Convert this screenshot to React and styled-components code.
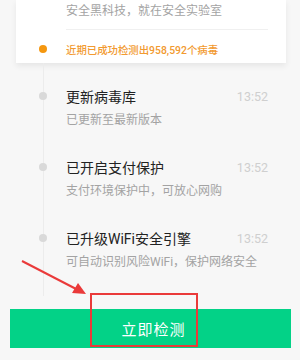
import React from 'react'
import styled, { createGlobalStyle } from 'styled-components'

const GlobalStyle = createGlobalStyle`
  html, body {
    margin: 0;
    padding: 0;
    background: #f7f7f7;
  }
  body {
    font-family: Roboto, "Noto Sans CJK SC", sans-serif;
  }
`

const Page = styled.div`
  position: relative;
  width: 300px;
  height: 360px;
  overflow: hidden;
  background: #f7f7f7;
`

const Card = styled.div`
  margin: 0 14px 0 16px;
  height: 63px;
  background: #fff;
  box-shadow: 0 3px 6px rgba(0, 0, 0, 0.07);
  display: flex;
  flex-direction: column;
`

const Slogan = styled.div`
  margin-left: 50px;
  font-size: 12px;
  line-height: 22px;
  color: #a3a3a3;
`

const Divider = styled.div`
  margin: 7px 18px 0 50px;
  height: 1px;
  background: #f0f0f0;
`

const Notice = styled.div`
  display: flex;
  align-items: center;
  margin-top: 9px;
  height: 20px;
`

const Dot = styled.span`
  flex: none;
  width: 8px;
  height: 8px;
  margin: 0 19px 0 ${(p) => p.$offset}px;
  border-radius: 50%;
  background: ${(p) => (p.$active ? '#f5970f' : '#d9d9d9')};
  position: relative;
  z-index: 1;
`

const NoticeText = styled.span`
  font-size: 10.4px;
  color: #f29a30;
  font-weight: 500;
`

const Timeline = styled.div`
  position: relative;
  padding: 22px 0 24px;

  &::before {
    content: '';
    position: absolute;
    left: 43px;
    top: 0;
    bottom: 0;
    width: 1px;
    background: #ececec;
  }
`

const Item = styled.div`
  display: flex;
  align-items: flex-start;
  margin-bottom: 26px;

  &:last-child {
    margin-bottom: 0;
  }

  ${Dot} {
    margin-top: 7px;
  }
`

const Body = styled.div`
  flex: 1;
  padding-right: 32px;
`

const TitleRow = styled.div`
  display: flex;
  justify-content: space-between;
  align-items: center;
  height: 22px;
`

const Title = styled.span`
  font-size: 14px;
  color: #222;
`

const Time = styled.span`
  font-family: Roboto, sans-serif;
  font-size: 12.5px;
  color: #cfcfcf;
`

const Desc = styled.div`
  margin-top: 3px;
  font-size: 12px;
  line-height: 20px;
  color: #a3a3a3;
`

const CheckButton = styled.button`
  display: block;
  width: 281px;
  height: 39px;
  margin: 13px 0 0 10px;
  border: none;
  background: #03d287;
  color: #fff;
  font-family: "Noto Sans CJK SC", sans-serif;
  font-size: 15px;
  letter-spacing: 1px;
  padding: 0 0 0 6px;
`

const Highlight = styled.div`
  position: absolute;
  left: 90px;
  top: 293px;
  width: 104px;
  height: 50px;
  border: 2px solid #ea3a3a;
`

const Arrow = styled.svg`
  position: absolute;
  left: 0;
  top: 250px;
`

const items = [
  { title: '更新病毒库', desc: '已更新至最新版本' },
  { title: '已开启支付保护', desc: '支付环境保护中，可放心网购' },
  { title: '已升级WiFi安全引擎', desc: '可自动识别风险WiFi，保护网络安全' },
]

export default function App() {
  return (
    <Page>
      <GlobalStyle />
      <Card>
        <Slogan>安全黑科技，就在安全实验室</Slogan>
        <Divider />
        <Notice>
          <Dot $active $offset={23} />
          <NoticeText>近期已成功检测出958,592个病毒</NoticeText>
        </Notice>
      </Card>
      <Timeline>
        {items.map((it) => (
          <Item key={it.title}>
            <Dot $offset={39} />
            <Body>
              <TitleRow>
                <Title>{it.title}</Title>
                <Time>13:52</Time>
              </TitleRow>
              <Desc>{it.desc}</Desc>
            </Body>
          </Item>
        ))}
      </Timeline>
      <CheckButton>立即检测</CheckButton>
      <Highlight />
      <Arrow width="100" height="50" viewBox="0 0 100 50">
        <line x1="22" y1="11" x2="80" y2="41" stroke="#ea3a3a" strokeWidth="2" />
        <polygon points="86,44 72,43 78,33" fill="#ea3a3a" />
      </Arrow>
    </Page>
  )
}
